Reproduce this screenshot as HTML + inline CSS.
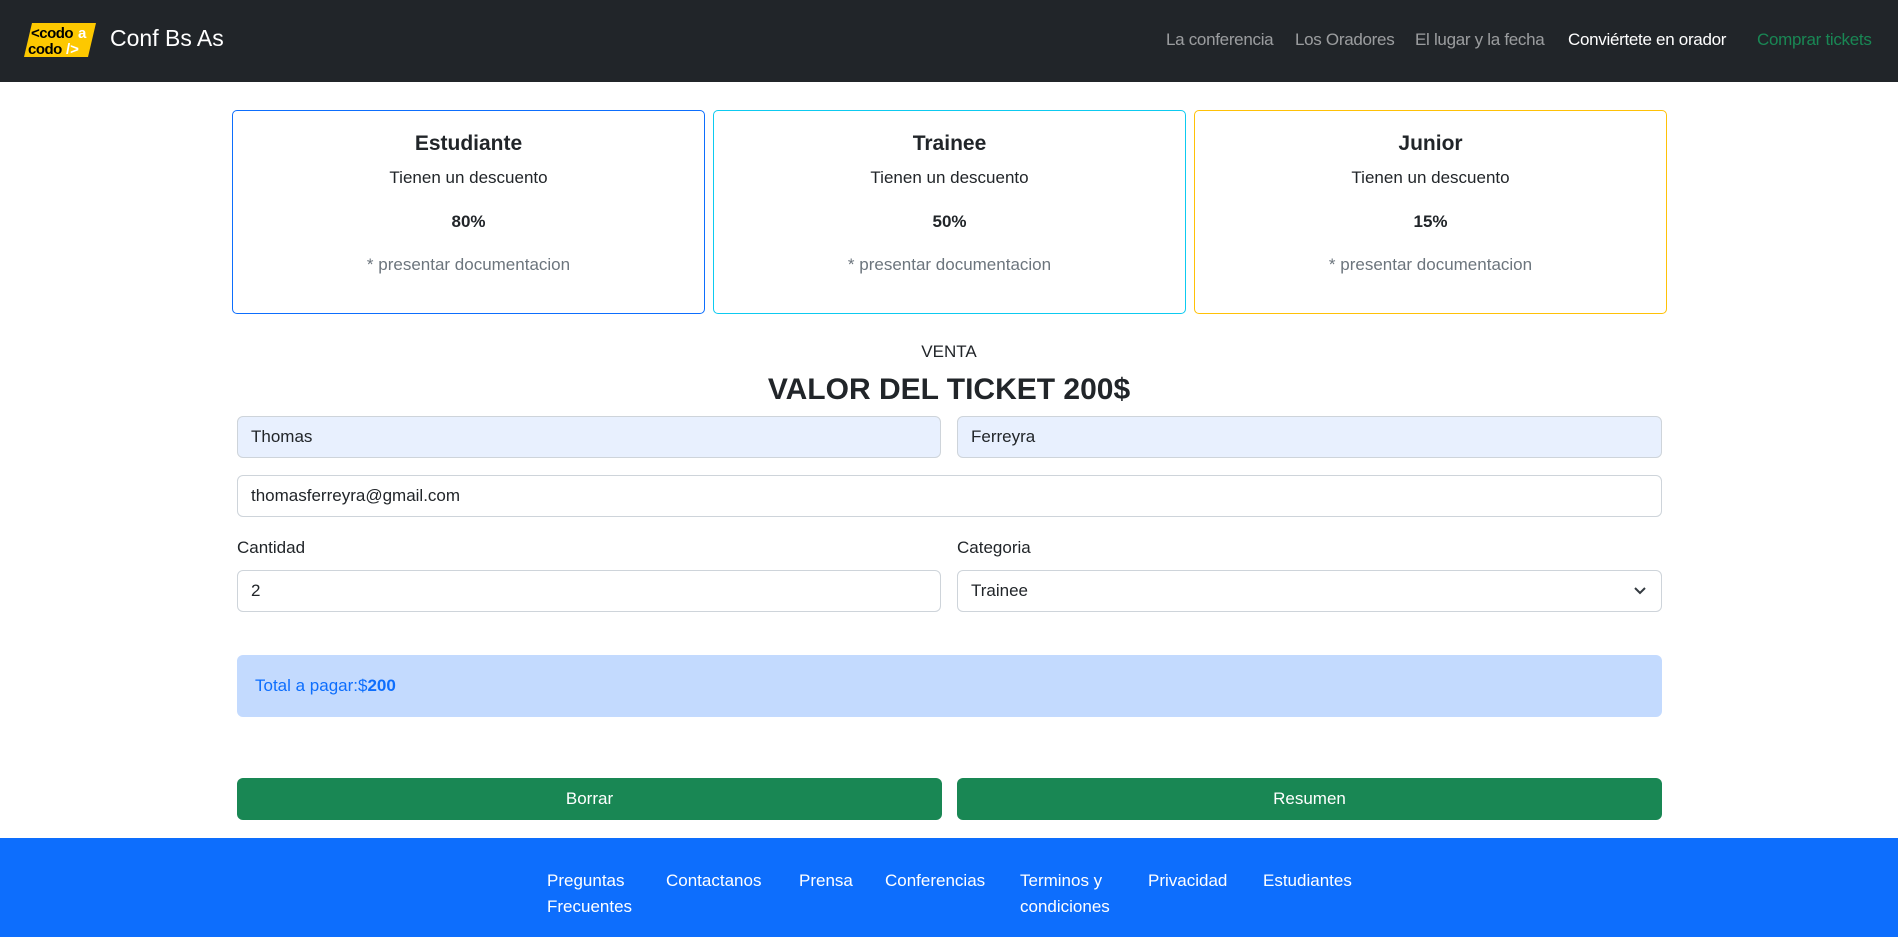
<!DOCTYPE html>
<html><head><meta charset="utf-8"><style>
*{box-sizing:border-box;margin:0;padding:0}
body{width:1898px;height:937px;overflow:hidden;background:#fff;font-family:"Liberation Sans",sans-serif;color:#212529;position:relative}
.a{position:absolute}
nav{position:absolute;left:0;top:0;width:1898px;height:82px;background:#212529}
.nl{position:absolute;top:30px;font-size:17px;color:rgba(255,255,255,.55);white-space:nowrap;letter-spacing:-.3px}
.card{position:absolute;top:110px;width:473px;height:204px;border:1px solid;border-radius:5px;text-align:center}
.card h5{position:absolute;top:21px;width:100%;font-size:21px;font-weight:bold}
.card .t{position:absolute;top:57px;width:100%;font-size:17px}
.card .p{position:absolute;top:101px;width:100%;font-size:17px;font-weight:bold}
.card .d{position:absolute;top:144px;width:100%;font-size:17px;color:#6c757d}
.in{position:absolute;height:42px;border:1px solid #ced4da;border-radius:6px;padding:0 13px;font-size:17px;line-height:40px}
.af{background:#e8f0fe}
.lbl{position:absolute;font-size:17px}
.btn{position:absolute;top:778px;height:42px;width:705px;background:#198754;color:#fff;border-radius:6px;text-align:center;line-height:42px;font-size:17px}
footer{position:absolute;left:0;top:838px;width:1898px;height:99px;background:#0d6efd}
.fl{position:absolute;top:30px;color:#fff;font-size:17px;line-height:26px}
</style></head><body>
<nav>
 <svg class="a" style="left:24px;top:23px" width="72" height="34" viewBox="0 0 72 34"><polygon points="8,0 72,0 64,34 0,34" fill="#fdc800"/>
 <text x="7" y="15" font-family="Liberation Sans" font-size="15" font-weight="bold" fill="#000" letter-spacing="-0.5">&lt;codo</text><text x="54" y="15" font-family="Liberation Sans" font-size="15" font-weight="bold" fill="#fff">a</text>
 <text x="4" y="31" font-family="Liberation Sans" font-size="15" font-weight="bold" fill="#000" letter-spacing="-0.5">codo</text><text x="42" y="31" font-family="Liberation Sans" font-size="15" font-weight="bold" fill="#fff">/&gt;</text></svg>
 <div class="a" style="left:110px;top:25px;font-size:23px;color:#fff">Conf Bs As</div>
 <div class="nl" style="left:1166px">La conferencia</div>
 <div class="nl" style="left:1295px">Los Oradores</div>
 <div class="nl" style="left:1415px">El lugar y la fecha</div>
 <div class="nl" style="left:1568px;color:#fff">Conviértete en orador</div>
 <div class="nl" style="left:1757px;color:#198754">Comprar tickets</div>
</nav>
<div class="card" style="left:232px;border-color:#0d6efd"><h5>Estudiante</h5><div class="t">Tienen un descuento</div><div class="p">80%</div><div class="d">* presentar documentacion</div></div>
<div class="card" style="left:713px;border-color:#0dcaf0"><h5>Trainee</h5><div class="t">Tienen un descuento</div><div class="p">50%</div><div class="d">* presentar documentacion</div></div>
<div class="card" style="left:1194px;border-color:#ffc107"><h5>Junior</h5><div class="t">Tienen un descuento</div><div class="p">15%</div><div class="d">* presentar documentacion</div></div>
<div class="a" style="left:0;width:1898px;top:342px;text-align:center;font-size:17px">VENTA</div>
<div class="a" style="left:0;width:1898px;top:373px;text-align:center;font-size:30px;font-weight:bold">VALOR DEL TICKET 200$</div>
<div class="in af" style="left:237px;top:416px;width:704px">Thomas</div>
<div class="in af" style="left:957px;top:416px;width:705px">Ferreyra</div>
<div class="in" style="left:237px;top:475px;width:1425px">thomasferreyra@gmail.com</div>
<div class="lbl" style="left:237px;top:538px">Cantidad</div>
<div class="lbl" style="left:957px;top:538px">Categoria</div>
<div class="in" style="left:237px;top:570px;width:704px">2</div>
<div class="in" style="left:957px;top:570px;width:705px">Trainee
 <svg class="a" style="right:14px;top:14px" width="14" height="12" viewBox="0 0 14 12"><path d="M2 3l5 5 5-5" stroke="#343a40" stroke-width="2" fill="none"/></svg></div>
<div class="a" style="left:237px;top:655px;width:1425px;height:62px;background:#c3dafe;border-radius:6px;color:#0d6efd;font-size:17px;line-height:62px;padding-left:18px">Total a pagar:$<b>200</b></div>
<div class="btn" style="left:237px">Borrar</div>
<div class="btn" style="left:957px">Resumen</div>
<footer>
 <div class="fl" style="left:547px">Preguntas<br>Frecuentes</div>
 <div class="fl" style="left:666px">Contactanos</div>
 <div class="fl" style="left:799px">Prensa</div>
 <div class="fl" style="left:885px">Conferencias</div>
 <div class="fl" style="left:1020px">Terminos y<br>condiciones</div>
 <div class="fl" style="left:1148px">Privacidad</div>
 <div class="fl" style="left:1263px">Estudiantes</div>
</footer>
</body></html>
